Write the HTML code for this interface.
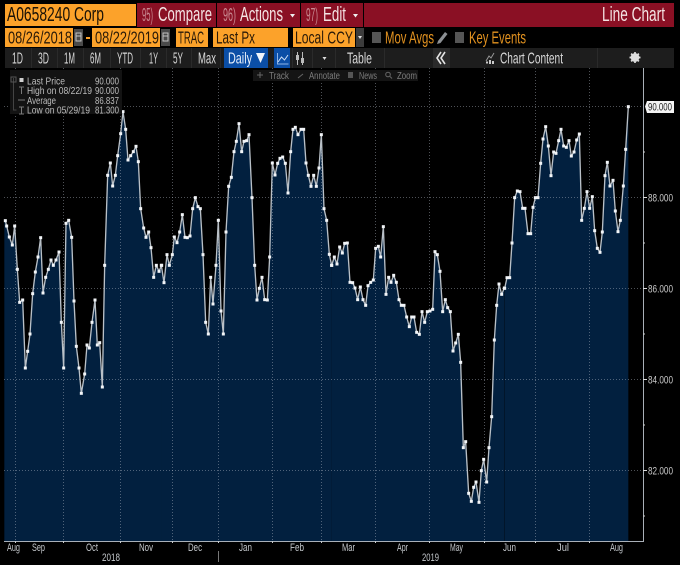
<!DOCTYPE html>
<html><head><meta charset="utf-8"><style>
html,body{margin:0;padding:0;background:#000;width:680px;height:565px;overflow:hidden}
svg{display:block;filter:blur(.3px)}
text{font-family:"Liberation Sans",sans-serif}
</style></head><body>
<svg width="680" height="565" viewBox="0 0 680 565" xmlns="http://www.w3.org/2000/svg">
<defs>
<marker id="m" markerUnits="userSpaceOnUse" markerWidth="14" markerHeight="14" refX="7" refY="7"><rect x="2.500" y="2.500" width="9" height="9" fill="#f2f5f8"/></marker>
</defs>
<rect width="680" height="565" fill="#000"/>

<!-- area -->
<g fill="#02203f">
<polygon transform="translate(0,100) scale(.33333)" points="13,1323 13,362 20,378 28,411 37,435 44,378 52,508 59,607 68,600 76,804 83,754 90,702 98,581 106,516 114,471 122,413 129,579 137,532 145,508 153,480 160,496 168,480 177,456 184,667 191,804 198,370 206,361 215,412 222,603 229,739 237,804 244,880 254,822 261,735 268,744 276,667 285,600 292,735 299,728 307,861 314,496 323,226 331,189 338,258 346,226 353,167 362,101 369,35 377,88 384,180 392,167 400,155 408,139 415,185 422,326 431,384 438,412 446,396 453,443 461,532 469,496 477,514 485,496 485,1323"/>
<polygon transform="translate(160,100) scale(.33333)" points="4,1323 4,496 12,548 21,464 28,496 37,464 43,411 51,428 59,396 67,344 75,412 82,413 90,408 98,326 106,293 114,320 121,326 129,464 137,667 145,702 152,532 159,612 168,496 175,361 183,633 190,702 198,396 206,259 214,232 222,155 229,124 237,71 245,155 252,124 260,122 267,104 276,293 284,496 291,600 298,565 306,532 314,599 322,600 329,471 337,189 345,225 353,190 360,175 368,171 376,190 384,279 392,155 399,88 406,82 414,104 423,88 431,88 438,189 445,226 453,259 461,226 469,259 477,204 484,104 492,326 500,361 508,463 515,496 515,1323"/>
<polygon transform="translate(330,200) scale(.33333)" points="5,1023 5,196 13,171 21,192 29,141 37,159 44,130 52,129 60,247 68,248 75,264 83,299 91,261 99,299 107,316 114,257 122,247 130,240 137,145 145,139 152,171 160,80 168,283 176,232 183,247 191,226 199,247 207,299 214,316 222,316 230,351 238,380 245,351 252,351 260,397 268,403 276,335 284,367 292,335 300,333 308,328 315,155 322,164 330,214 338,335 346,299 353,323 361,335 369,453 377,429 385,403 392,487 400,743 407,725 416,880 424,904 431,862 438,846 447,907 454,812 461,778 470,846 477,743 485,650 493,420 500,316 507,252 515,283 523,264 523,1023"/>
<polygon transform="translate(500,90) scale(.33333)" points="14,1353 14,595 21,563 29,563 36,459 44,323 52,303 60,305 68,355 75,355 84,431 92,431 99,352 106,323 114,323 122,220 129,147 137,110 145,168 153,257 161,186 168,190 176,152 183,118 191,168 199,172 207,152 214,198 222,186 230,150 238,132 245,391 253,355 261,305 269,355 277,320 284,422 292,475 300,487 307,426 315,257 322,217 330,288 339,271 346,363 354,425 361,391 370,288 377,178 385,50 385,1353"/>
</g>

<!-- grid -->
<g stroke="#b9c2cc" stroke-opacity=".42" stroke-width="1" stroke-dasharray="1 2" fill="none">
<path d="M4 106.500H643M4 197.500H643M4 288.500H643M4 379.500H643M4 470.500H643"/>
<path d="M15.500 68V541M63.500 68V541M120.500 68V541M172.500 68V541M218.500 68V541M272.500 68V541M321.500 68V541M375.500 68V541M429.500 68V541M484.500 68V541M535.500 68V541M589.500 68V541"/>
</g>

<!-- price line -->
<g fill="none" stroke="#b9c0c7" stroke-width="4" stroke-linejoin="round" marker-start="url(#m)" marker-mid="url(#m)" marker-end="url(#m)">
<polyline transform="translate(0,100) scale(.33333)" points="16,362 20,378 28,411 37,435 44,378 52,508 59,607 68,600 76,804 83,754 90,702 98,581 106,516 114,471 122,413 129,579 137,532 145,508 153,480 160,496 168,480 177,456 184,667 191,804 198,370 206,361 215,412 222,603 229,739 237,804 244,880 254,822 261,735 268,744 276,667 285,600 292,735 299,728 307,861 314,496 323,226 331,189 338,258 346,226 353,167 362,101 369,35 377,88 384,180 392,167 400,155 408,139 415,185 422,326 431,384 438,412 446,396 453,443 461,532 469,496 477,514 485,496"/>
<polyline transform="translate(160,100) scale(.33333)" points="4,496 12,548 21,464 28,496 37,464 43,411 51,428 59,396 67,344 75,412 82,413 90,408 98,326 106,293 114,320 121,326 129,464 137,667 145,702 152,532 159,612 168,496 175,361 183,633 190,702 198,396 206,259 214,232 222,155 229,124 237,71 245,155 252,124 260,122 267,104 276,293 284,496 291,600 298,565 306,532 314,599 322,600 329,471 337,189 345,225 353,190 360,175 368,171 376,190 384,279 392,155 399,88 406,82 414,104 423,88 431,88 438,189 445,226 453,259 461,226 469,259 477,204 484,104 492,326 500,361 508,463 515,496"/>
<polyline transform="translate(330,200) scale(.33333)" points="5,196 13,171 21,192 29,141 37,159 44,130 52,129 60,247 68,248 75,264 83,299 91,261 99,299 107,316 114,257 122,247 130,240 137,145 145,139 152,171 160,80 168,283 176,232 183,247 191,226 199,247 207,299 214,316 222,316 230,351 238,380 245,351 252,351 260,397 268,403 276,335 284,367 292,335 300,333 308,328 315,155 322,164 330,214 338,335 346,299 353,323 361,335 369,453 377,429 385,403 392,487 400,743 407,725 416,880 424,904 431,862 438,846 447,907 454,812 461,778 470,846 477,743 485,650 493,420 500,316 507,252 515,283 523,264"/>
<polyline transform="translate(500,90) scale(.33333)" points="14,595 21,563 29,563 36,459 44,323 52,303 60,305 68,355 75,355 84,431 92,431 99,352 106,323 114,323 122,220 129,147 137,110 145,168 153,257 161,186 168,190 176,152 183,118 191,168 199,172 207,152 214,198 222,186 230,150 238,132 245,391 253,355 261,305 269,355 277,320 284,422 292,475 300,487 307,426 315,257 322,217 330,288 339,271 346,363 354,425 361,391 370,288 377,178 385,50"/>
</g>

<!-- axes -->
<path d="M4 541.500H643.500V68" fill="none" stroke="#a9b0b8" stroke-width="1"/>
<path d="M15.500 541v2M63.500 541v2M120.500 541v2M172.500 541v2M218.500 541v2M272.500 541v2M321.500 541v2M375.500 541v2M429.500 541v2M484.500 541v2M535.500 541v2M589.500 541v2" stroke="#c8ccd0"/>
<path d="M218.500 551v11" stroke="#777"/>
<path d="M643 152h2M643 243h2M643 334h2M643 425h2M643 516h2" stroke="#ccc"/>
<path d="M643 197.500h4M643 288.500h4M643 379.500h4M643 470.500h4" stroke="#ddd"/>
<g font-size="11" fill="#c8c8c8">
<text x="648" y="201.500" textLength="25" lengthAdjust="spacingAndGlyphs">88.000</text>
<text x="648" y="292.500" textLength="25" lengthAdjust="spacingAndGlyphs">86.000</text>
<text x="648" y="383.500" textLength="25" lengthAdjust="spacingAndGlyphs">84.000</text>
<text x="648" y="474.500" textLength="25" lengthAdjust="spacingAndGlyphs">82.000</text>
</g>
<path d="M645 106.500l2-5.500h27v12h-27z" fill="#f4f4f4"/>
<text x="648" y="110.500" font-size="11" fill="#222" textLength="24" lengthAdjust="spacingAndGlyphs">90.000</text>
<g font-size="11" fill="#c4c8cc">
<text x="7" y="551" textLength="13" lengthAdjust="spacingAndGlyphs">Aug</text>
<text x="32" y="551" textLength="13" lengthAdjust="spacingAndGlyphs">Sep</text>
<text x="86" y="551" textLength="12" lengthAdjust="spacingAndGlyphs">Oct</text>
<text x="139" y="551" textLength="14" lengthAdjust="spacingAndGlyphs">Nov</text>
<text x="188" y="551" textLength="14" lengthAdjust="spacingAndGlyphs">Dec</text>
<text x="239" y="551" textLength="13" lengthAdjust="spacingAndGlyphs">Jan</text>
<text x="290" y="551" textLength="14" lengthAdjust="spacingAndGlyphs">Feb</text>
<text x="342" y="551" textLength="13" lengthAdjust="spacingAndGlyphs">Mar</text>
<text x="397" y="551" textLength="11" lengthAdjust="spacingAndGlyphs">Apr</text>
<text x="450" y="551" textLength="13" lengthAdjust="spacingAndGlyphs">May</text>
<text x="503" y="551" textLength="13" lengthAdjust="spacingAndGlyphs">Jun</text>
<text x="557" y="551" textLength="12" lengthAdjust="spacingAndGlyphs">Jul</text>
<text x="610" y="551" textLength="13" lengthAdjust="spacingAndGlyphs">Aug</text>
<text x="102" y="561" textLength="18" lengthAdjust="spacingAndGlyphs">2018</text>
<text x="422" y="561" textLength="17" lengthAdjust="spacingAndGlyphs">2019</text>
</g>

<!-- row 1 -->
<rect x="5" y="4" width="131" height="22" fill="#fca22a"/>
<text x="7" y="21" font-size="20" fill="#1a1206" textLength="97" lengthAdjust="spacingAndGlyphs">A0658240 Corp</text>
<rect x="137" y="3" width="79" height="24" fill="#8a1024"/>
<rect x="217" y="3" width="83" height="24" fill="#8a1024"/>
<rect x="301" y="3" width="62" height="24" fill="#8a1024"/>
<rect x="364" y="3" width="310" height="24" fill="#8a1024"/>
<g font-size="20" fill="#f4e4e4">
<text x="142" y="21" fill="#c98a92" font-size="18" textLength="11" lengthAdjust="spacingAndGlyphs">95)</text>
<text x="158" y="21" textLength="54" lengthAdjust="spacingAndGlyphs">Compare</text>
<text x="223" y="21" fill="#c98a92" font-size="18" textLength="13" lengthAdjust="spacingAndGlyphs">96)</text>
<text x="240" y="21" textLength="43" lengthAdjust="spacingAndGlyphs">Actions</text>
<text x="306" y="21" fill="#c98a92" font-size="18" textLength="12" lengthAdjust="spacingAndGlyphs">97)</text>
<text x="323" y="21" textLength="23" lengthAdjust="spacingAndGlyphs">Edit</text>
<text x="602" y="21" textLength="63" lengthAdjust="spacingAndGlyphs">Line Chart</text>
</g>
<path d="M290 14h5l-2.500 3.500zM353 14h5l-2.500 3.500z" fill="#eee"/>

<!-- row 2 -->
<g fill="#fca22a">
<rect x="5" y="28" width="68" height="19"/>
<rect x="92" y="28" width="68" height="19"/>
<rect x="176" y="28" width="32" height="19"/>
<rect x="213" y="28" width="75" height="19"/>
<rect x="293" y="28" width="62" height="19"/>
</g>
<g font-size="17.500" fill="#2a1a08">
<text x="8" y="43.500" textLength="64" lengthAdjust="spacingAndGlyphs">08/26/2018</text>
<text x="95" y="43.500" textLength="64" lengthAdjust="spacingAndGlyphs">08/22/2019</text>
<text x="178" y="43.500" textLength="26" lengthAdjust="spacingAndGlyphs">TRAC</text>
<text x="216" y="43.500" textLength="39" lengthAdjust="spacingAndGlyphs">Last Px</text>
<text x="295" y="43.500" textLength="58" lengthAdjust="spacingAndGlyphs">Local CCY</text>
</g>
<rect x="86" y="37" width="4" height="2" fill="#fca22a"/>
<g fill="#4a4a4a">
<rect x="74" y="29" width="9" height="17"/>
<rect x="161" y="29" width="9" height="17"/>
<rect x="356" y="28" width="8" height="19" fill="#3c3c3c"/>
<rect x="372" y="32" width="9" height="11" fill="#555"/>
<rect x="455" y="32" width="9" height="11" fill="#555"/>
</g>
<path d="M76 33h5v8h-5zM163 33h5v8h-5z" fill="none" stroke="#c4c4c4" stroke-width="1"/>
<path d="M76 36h5M163 36h5" stroke="#c4c4c4"/>
<path d="M358 36h4l-2 3z" fill="#ddd"/>
<g font-size="17.500" fill="#e29220">
<text x="385" y="43.500" textLength="49" lengthAdjust="spacingAndGlyphs">Mov Avgs</text>
<text x="469" y="43.500" textLength="57" lengthAdjust="spacingAndGlyphs">Key Events</text>
</g>
<path d="M437 44l1-3 7-9 2.500 2-7 9z" fill="#8c9094"/>

<!-- row 3 -->
<rect x="5" y="48" width="669" height="20" fill="#1d1d1d"/>
<path d="M31.500 48v20M57.500 48v20M83.500 48v20M110.500 48v20M140.500 48v20M166.500 48v20M191.500 48v20M220.500 48v20M292.500 48v20M312.500 48v20M335.500 48v20M384.500 48v20M433.500 48v20M449.500 48v20M597.500 48v20" stroke="#2a2a2a"/>
<rect x="433" y="48" width="17" height="20" fill="#2a2a2a"/>
<g font-size="16" fill="#d8d8d8">
<text x="12" y="63.500" textLength="11" lengthAdjust="spacingAndGlyphs">1D</text>
<text x="38" y="63.500" textLength="11" lengthAdjust="spacingAndGlyphs">3D</text>
<text x="64" y="63.500" textLength="11" lengthAdjust="spacingAndGlyphs">1M</text>
<text x="90" y="63.500" textLength="11" lengthAdjust="spacingAndGlyphs">6M</text>
<text x="117" y="63.500" textLength="16" lengthAdjust="spacingAndGlyphs">YTD</text>
<text x="149" y="63.500" textLength="9" lengthAdjust="spacingAndGlyphs">1Y</text>
<text x="173" y="63.500" textLength="10" lengthAdjust="spacingAndGlyphs">5Y</text>
<text x="198" y="63.500" textLength="18" lengthAdjust="spacingAndGlyphs">Max</text>
<text x="347" y="63.500" textLength="25" lengthAdjust="spacingAndGlyphs">Table</text>
<text x="500" y="63.500" textLength="63" lengthAdjust="spacingAndGlyphs">Chart Content</text>
</g>
<rect x="224" y="48" width="44" height="20" fill="#0b4ea6"/>
<text x="228" y="63.500" font-size="16" fill="#e6eefa" textLength="24" lengthAdjust="spacingAndGlyphs">Daily</text>
<path d="M256 53h9l-4.500 10z" fill="#f0f4fa"/>
<rect x="274" y="48" width="16" height="20" fill="#0b4ea6"/>
<path d="M277.500 53v11h11" fill="none" stroke="#8fb4e6"/>
<path d="M278 62l3.500-5 3 3 3.500-5" fill="none" stroke="#cfe0f6"/>
<path d="M297.500 52v13M302.500 52v13" stroke="#bbb"/>
<rect x="296" y="55" width="3" height="5" fill="#bbb"/>
<rect x="301" y="58" width="3" height="5" fill="#bbb"/>
<path d="M322.500 57h4l-2 3z" fill="#ddd"/>
<path d="M441 52l-4 6 4 6M445 52l-4 6 4 6" fill="none" stroke="#e4e4e4" stroke-width="1.600"/>
<path d="M486 61l3-5 2 2 3-5" fill="none" stroke="#999"/>
<path d="M487 63.500v-2M490 64v-4M493 64v-3" stroke="#ddd" stroke-width="1.800"/>
<g transform="translate(635,57.500)">
<circle r="3.200" fill="none" stroke="#ddd" stroke-width="2.400"/>
<path d="M0-5.500v11M-5.500 0h11M-3.900-3.900l7.800 7.800M3.900-3.900l-7.800 7.800" stroke="#ddd" stroke-width="1.700"/>
</g>

<!-- track bar -->
<rect x="253" y="70" width="165" height="11" fill="#141414"/>
<g font-size="10" fill="#7c7c7c">
<path d="M257 75h6M260 72v6" stroke="#666"/>
<text x="269" y="79" textLength="20" lengthAdjust="spacingAndGlyphs">Track</text>
<path d="M298 78l5-4" stroke="#666"/>
<text x="309" y="79" textLength="31" lengthAdjust="spacingAndGlyphs">Annotate</text>
<rect x="348" y="72" width="5" height="6" fill="#555"/>
<text x="359" y="79" textLength="18" lengthAdjust="spacingAndGlyphs">News</text>
<circle cx="388" cy="74.500" r="2.300" fill="none" stroke="#666"/>
<path d="M390 76.500l2 2" stroke="#666"/>
<text x="397" y="79" textLength="20" lengthAdjust="spacingAndGlyphs">Zoom</text>
</g>

<!-- legend -->
<rect x="10" y="70" width="112" height="44" fill="#131313"/>
<path d="M13.500 78v32h3" fill="none" stroke="#444"/>
<rect x="11" y="77" width="5" height="5" fill="none" stroke="#555"/>
<rect x="19.500" y="78" width="4" height="4" fill="#d0d0d0"/>
<path d="M19 87h5M21.500 87v7M18 100h7M21.500 107v7M19 114h5M19 107h5" stroke="#7a7a7a"/>
<g font-size="10.500" fill="#bcbcbc">
<text x="27" y="84.500" textLength="38" lengthAdjust="spacingAndGlyphs">Last Price</text>
<text x="27" y="94" textLength="65" lengthAdjust="spacingAndGlyphs">High on 08/22/19</text>
<text x="27" y="104" textLength="29" lengthAdjust="spacingAndGlyphs">Average</text>
<text x="27" y="113.500" textLength="63" lengthAdjust="spacingAndGlyphs">Low on 05/29/19</text>
<text x="95" y="84.500" textLength="24" lengthAdjust="spacingAndGlyphs">90.000</text>
<text x="95" y="94" textLength="24" lengthAdjust="spacingAndGlyphs">90.000</text>
<text x="95" y="104" textLength="24" lengthAdjust="spacingAndGlyphs">86.837</text>
<text x="95" y="113.500" textLength="24" lengthAdjust="spacingAndGlyphs">81.300</text>
</g>
</svg>
</body></html>
